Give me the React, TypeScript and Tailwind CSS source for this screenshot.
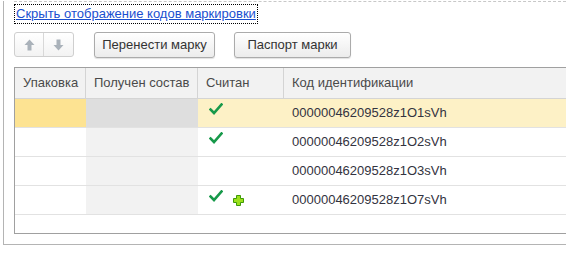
import React from "react";

const Check = () => (
  <svg width="14" height="12" viewBox="0 0 14 12" className="block">
    <path d="M1.5 6.5 L5 10 L12.5 1.5" fill="none" stroke="#17994a" strokeWidth="2.6" strokeLinecap="square" />
  </svg>
);

const Plus = () => (
  <svg width="11" height="11" viewBox="0 0 11 11" className="block">
    <path d="M3.5 0.5 H7.5 V3.5 H10.5 V7.5 H7.5 V10.5 H3.5 V7.5 H0.5 V3.5 H3.5 Z" fill="#9be01c" stroke="#3f9a06" strokeWidth="1" />
  </svg>
);

const Arrow = ({ down }: { down?: boolean }) => (
  <svg width="11" height="12" viewBox="0 0 11 12" className="block" style={down ? { transform: "rotate(180deg)" } : undefined}>
    <path d="M5.5 0.5 L10.5 6 H7.5 V11.5 H3.5 V6 H0.5 Z" fill="#aab2ba" />
  </svg>
);

const rows = [
  { code: "00000046209528z1O1sVh", check: true, plus: false, sel: true },
  { code: "00000046209528z1O2sVh", check: true, plus: false, sel: false },
  { code: "00000046209528z1O3sVh", check: false, plus: false, sel: false },
  { code: "00000046209528z1O7sVh", check: true, plus: true, sel: false },
];

export default function App() {
  return (
    <div
      className="w-[566px] h-[254px] bg-white overflow-hidden text-[13px] text-[#333]"
      style={{ fontFamily: '"Liberation Sans", Arial, sans-serif' }}
    >
      <div className="ml-[3px] h-[244px] border-l border-b border-[#b4b4b4] pl-[10px]">
        <div className="mt-px border-t border-dashed border-[#c8c8c8] h-0" />
        <div className="mt-[2px] flex">
          <div className="h-[20px] px-px border border-dotted border-black flex items-center">
            <span className="text-[#1a4fd0] underline leading-[16px]">Скрыть отображение кодов маркировки</span>
          </div>
        </div>
        <div className="mt-[8px] flex items-center h-[25px]">
          <div className="w-[60px] h-[25px] border border-[#cfcfcf] rounded-[3px] flex bg-gradient-to-b from-white to-[#f3f3f3]">
            <div className="w-[29px] flex items-center justify-center border-r border-[#d8d8d8]">
              <Arrow />
            </div>
            <div className="flex-1 flex items-center justify-center">
              <Arrow down />
            </div>
          </div>
          <div className="ml-[20px] w-[121px] h-[26px] border border-[#ababab] rounded-[3px] bg-gradient-to-b from-white to-[#ececec] shadow-[0_1px_1px_rgba(0,0,0,0.12)] flex items-center justify-center">
            Перенести марку
          </div>
          <div className="ml-[19px] w-[117px] h-[26px] border border-[#ababab] rounded-[3px] bg-gradient-to-b from-white to-[#ececec] shadow-[0_1px_1px_rgba(0,0,0,0.12)] flex items-center justify-center">
            Паспорт марки
          </div>
        </div>
        <div className="mt-[10px] h-[167px] border-t border-l border-b border-[#a0a0a0] flex flex-col">
          <div className="h-[31px] flex bg-[#f2f2f2] border-b border-[#d4d4d4] text-[#4a4a4a]">
            <div className="w-[71px] pl-[8px] border-r border-[#d4d4d4] flex items-center">Упаковка</div>
            <div className="w-[112px] pl-[8px] border-r border-[#d4d4d4] flex items-center">Получен состав</div>
            <div className="w-[86px] pl-[8px] border-r border-[#d4d4d4] flex items-center">Считан</div>
            <div className="flex-1 pl-[8px] flex items-center">Код идентификации</div>
          </div>
          {rows.map((r) => (
            <div key={r.code} className={`h-[29px] flex border-b border-[#e2e2e2] ${r.sel ? "bg-[#fdf1c6]" : "bg-white"}`}>
              <div className={`w-[71px] ${r.sel ? "bg-[#fde392]" : ""}`} />
              <div className={`w-[112px] ${r.sel ? "bg-[#dedede]" : "bg-[#f2f2f2]"}`} />
              <div className="w-[86px] relative">
                {r.check && (
                  <div className="absolute left-[11px] top-[4px]">
                    <Check />
                  </div>
                )}
                {r.plus && (
                  <div className="absolute left-[35px] top-[9px]">
                    <Plus />
                  </div>
                )}
              </div>
              <div className="flex-1 pl-[8px] flex items-center text-[#333340]">{r.code}</div>
            </div>
          ))}
        </div>
      </div>
    </div>
  );
}
